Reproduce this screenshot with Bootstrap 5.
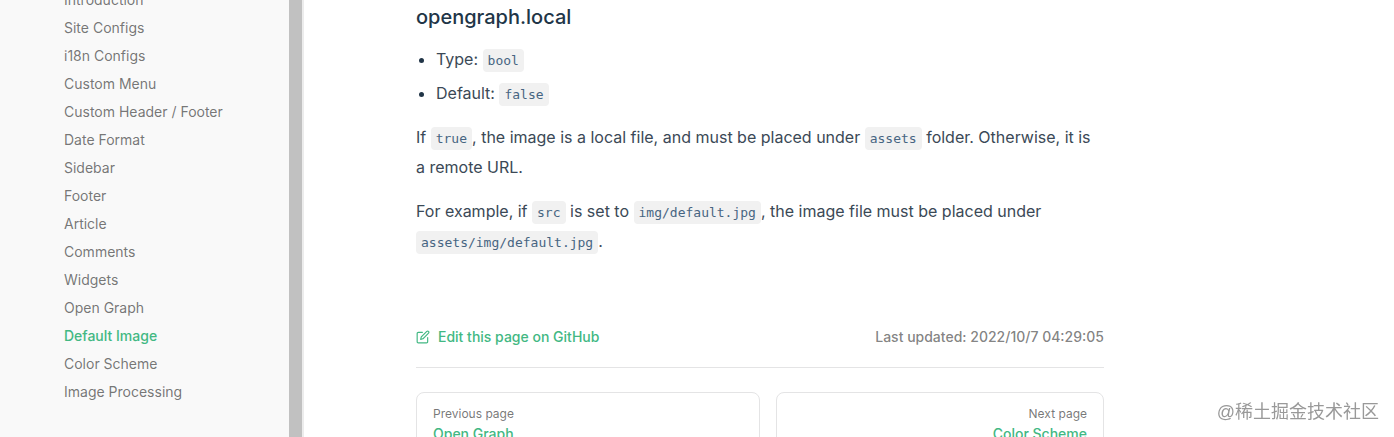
<!DOCTYPE html>
<html lang="en">
<head>
<meta charset="utf-8">
<meta name="viewport" content="width=device-width, initial-scale=1">
<title>opengraph.local</title>
<link rel="stylesheet" href="https://cdn.jsdelivr.net/npm/bootstrap@5.3.0/dist/css/bootstrap.min.css">
<style>
  :root { --brand: #42b883; --ink: #213547; --ink-text: #3b4956; --ink-soft: rgba(60, 60, 60, .7); --line: #e4e4e5; }
  body { font-family: Inter, "Noto Sans CJK SC", sans-serif; color: var(--ink); background: #fff; }
  a { text-decoration: none; }
  .side-pane { width: 304px; background: #f9f9f9; border-right: 2px solid #ececec; }
  .side-links { padding: 0 32px 31px 64px; }
  .side-links a { display: block; font-size: 14px; line-height: 20px; padding: 4px 0; color: var(--ink-soft); }
  .side-links a.active { color: var(--brand); font-weight: 500; }
  .side-thumb { width: 13px; background: #c1c1c1; }
  .doc { max-width: 800px; padding-left: 112px; }
  .doc h3 { font-size: 20px; line-height: 28px; font-weight: 500; margin: 3px 0 13px; }
  .doc ul { padding-left: 20px; margin: 0 0 14px; }
  .doc li { line-height: 30px; color: var(--ink-text); }
  .doc li::marker { color: var(--ink); }
  .doc li + li { margin-top: 4px; }
  .doc p { line-height: 30px; margin: 0 0 14px; color: var(--ink-text); }
  .doc code { font-family: "DejaVu Sans Mono", monospace; font-size: 13px; line-height: 1; color: #476582; background: #f1f1f1; border-radius: 4px; padding: 4px 5px; }
  .doc-foot { margin-top: 65px; }
  .edit-row { font-size: 14px; line-height: 32px; padding-bottom: 14px; border-bottom: 1px solid var(--line); }
  .edit-row a { color: var(--brand); font-weight: 500; }
  .stamp { color: rgba(60, 60, 60, .65); font-weight: 500; }
  .pager { padding-top: 24px; }
  .pager a { display: block; border: 1px solid var(--line); border-radius: 8px; padding: 11px 16px 13px; }
  .pager span { display: block; line-height: 20px; }
  .pager .hint { font-size: 12px; color: var(--ink-soft); }
  .pager .dest { font-size: 14px; font-weight: 500; color: var(--brand); }
  .watermark { right: 15px; bottom: 11px; font-size: 18px; line-height: 27px; color: #999; font-family: "Liberation Sans", "Noto Sans CJK SC", sans-serif; }
</style>
</head>
<body>
<div class="d-flex vh-100 overflow-hidden">
  <aside class="side-pane d-flex flex-shrink-0">
    <nav class="side-links d-flex flex-column justify-content-end flex-grow-1" aria-label="Docs">
      <a href="#">Introduction</a>
      <a href="#">Site Configs</a>
      <a href="#">i18n Configs</a>
      <a href="#">Custom Menu</a>
      <a href="#">Custom Header / Footer</a>
      <a href="#">Date Format</a>
      <a href="#">Sidebar</a>
      <a href="#">Footer</a>
      <a href="#">Article</a>
      <a href="#">Comments</a>
      <a href="#">Widgets</a>
      <a href="#">Open Graph</a>
      <a href="#" class="active" aria-current="page">Default Image</a>
      <a href="#">Color Scheme</a>
      <a href="#">Image Processing</a>
    </nav>
    <div class="side-thumb"></div>
  </aside>
  <main class="flex-grow-1">
    <article class="doc">
      <h3>opengraph.local</h3>
      <ul>
        <li>Type: <code>bool</code></li>
        <li>Default: <code>false</code></li>
      </ul>
      <p>If <code>true</code>, the image is a local file, and must be placed under <code>assets</code> folder. Otherwise, it is a remote URL.</p>
      <p>For example, if <code>src</code> is set to <code>img/default.jpg</code>, the image file must be placed under <code>assets/img/default.jpg</code>.</p>
      <footer class="doc-foot">
        <div class="edit-row d-flex justify-content-between">
          <a href="#" class="d-flex align-items-center gap-2"><svg width="14" height="14" viewBox="0 0 24 24" fill="currentColor" aria-hidden="true"><path d="M18 23H4c-1.700 0-3-1.300-3-3V6c0-1.700 1.300-3 3-3h7c.6 0 1 .4 1 1s-.4 1-1 1H4c-.6 0-1 .4-1 1v14c0 .6.4 1 1 1h14c.6 0 1-.4 1-1v-7c0-.6.4-1 1-1s1 .4 1 1v7c0 1.700-1.300 3-3 3z"/><path d="M8 17c-.3 0-.5-.1-.7-.3-.2-.2-.3-.6-.3-.9l1-4c0-.2.100-.3.300-.5l9.500-9.500c1.200-1.200 3.200-1.200 4.400 0 1.200 1.200 1.200 3.200 0 4.400l-9.500 9.500c-.1.100-.3.200-.5.300l-4 1H8zm1.900-4.500-.5 2.100 2.100-.5 9.300-9.300c.4-.4.4-1.100 0-1.600-.4-.4-1.200-.4-1.600 0l-9.300 9.300z"/></svg>Edit this page on GitHub</a>
          <span class="stamp">Last updated: 2022/10/7 04:29:05</span>
        </div>
        <nav class="pager row g-0" aria-label="Pager">
          <div class="col-6"><a href="#"><span class="hint">Previous page</span><span class="dest">Open Graph</span></a></div>
          <div class="col-6 ps-3 text-end"><a href="#"><span class="hint">Next page</span><span class="dest">Color Scheme</span></a></div>
        </nav>
      </footer>
    </article>
  </main>
</div>
<div class="watermark position-fixed">@稀土掘金技术社区</div>
<script src="https://cdn.jsdelivr.net/npm/bootstrap@5.3.0/dist/js/bootstrap.bundle.min.js"></script>
</body>
</html>
